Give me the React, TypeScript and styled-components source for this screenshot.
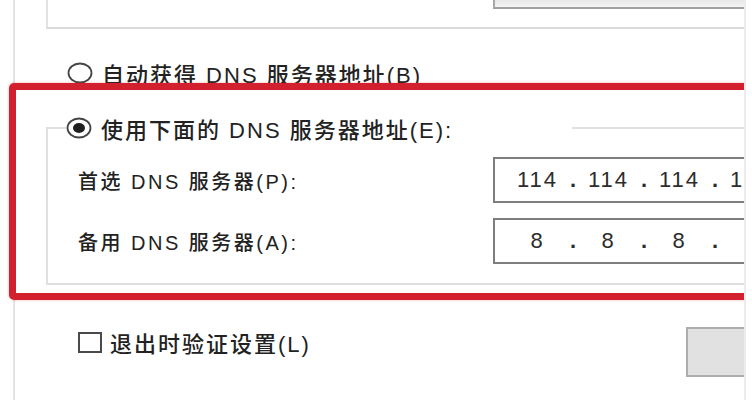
import React from "react";
import styled, { createGlobalStyle } from "styled-components";

const GlobalStyle = createGlobalStyle`
  * { box-sizing: border-box; }
  html, body { margin: 0; padding: 0; background: #ffffff; }
  body {
    font-family: "Liberation Sans", "Noto Sans CJK SC", sans-serif;
    font-weight: 500;
    color: #222;
  }
`;

const Page = styled.div`
  position: relative;
  width: 746px;
  height: 400px;
  overflow: hidden;
  border-right: 2px solid #ececec;
  background: #ffffff;
`;

const Frame = styled.div`
  margin-left: 13px;
  height: 100%;
  border-left: 2px solid #e4e4e4;
  display: flex;
  flex-direction: column;
`;

const TopGroup = styled.div`
  flex: none;
  margin-left: 31px;
  height: 29px;
  border-left: 2px solid #e2e2e2;
  border-bottom: 2px solid #dadada;
  display: flex;
`;

const DisabledBox = styled.div`
  flex: none;
  margin-left: 445px;
  width: 300px;
  height: 9px;
  border-left: 2px solid #a8a8a8;
  border-bottom: 2px solid #a0a0a0;
  background: linear-gradient(#e8e8e8, #f3f3f3);
`;

const RadioRow = styled.div`
  flex: none;
  display: flex;
  align-items: center;
  height: 24px;
  margin: 32px 0 0 52px;
  font-size: 22px;
  letter-spacing: 2px;
  white-space: nowrap;
`;

const Group = styled.fieldset`
  flex: none;
  margin: 31px -40px 0 31px;
  padding: 17px 0 19px 30px;
  border: 2px solid #e0e0e0;
  min-width: 0;
`;

const Legend = styled.legend`
  display: flex;
  align-items: center;
  width: 506px;
  height: 24px;
  padding: 0;
  margin-left: -12px;
  font-size: 22px;
  letter-spacing: 2px;
  white-space: nowrap;
`;

const RadioIcon = styled.svg`
  flex: none;
  margin-right: 9px;
`;

const FieldRow = styled.div<{ $gap?: number }>`
  display: flex;
  align-items: center;
  height: 46px;
  margin-top: ${(p) => p.$gap ?? 0}px;
`;

const FieldLabel = styled.div`
  flex: none;
  width: 415px;
  font-size: 20px;
  letter-spacing: 2.5px;
  white-space: nowrap;
`;

const IpBox = styled.div`
  flex: none;
  display: flex;
  align-items: center;
  width: 320px;
  height: 46px;
  padding-left: 12px;
  border: 2px solid #7e7e7e;
  background: #fff;
  font-family: "Liberation Sans", sans-serif;
  font-size: 22px;
  color: #2c2c2c;
`;

const IpPart = styled.span`
  flex: none;
  width: 61px;
  text-align: center;
  letter-spacing: 2px;
`;

const IpDot = styled.span`
  flex: none;
  width: 10px;
  text-align: center;
  font-weight: bold;
`;

const BottomRow = styled.div`
  flex: none;
  display: flex;
  align-items: flex-start;
  height: 50px;
  margin-top: 42px;
`;

const CheckLabel = styled.div`
  flex: none;
  display: flex;
  align-items: center;
  gap: 8px;
  height: 24px;
  margin: 3px 0 0 63px;
  font-size: 22px;
  letter-spacing: 2px;
  white-space: nowrap;
`;

const CheckBox = styled.span`
  flex: none;
  width: 24px;
  height: 21px;
  border: 2px solid #4a4a4a;
  background: #fff;
`;

const Button = styled.div`
  flex: none;
  margin-left: auto;
  width: 58px;
  height: 50px;
  border: 2px solid #adadad;
  border-right: none;
  background: #e1e1e1;
`;

const Highlight = styled.div`
  position: absolute;
  left: 9px;
  top: 83px;
  right: -30px;
  height: 217px;
  border: 7px solid #d3202f;
  border-radius: 5px;
  box-shadow: 0 0 3px rgba(211, 32, 47, 0.35);
  pointer-events: none;
`;

function Radio({ checked }: { checked?: boolean }) {
  return (
    <RadioIcon width="26" height="22" viewBox="0 0 26 22">
      <ellipse cx="13" cy="11" rx="11.5" ry="9.5" fill="#fff" stroke="#444" strokeWidth="1.8" />
      {checked && <ellipse cx="13" cy="11" rx="6" ry="5" fill="#1f1f1f" />}
    </RadioIcon>
  );
}

function IpAddress({ parts }: { parts: string[] }) {
  return (
    <IpBox>
      {parts.map((p, i) => (
        <React.Fragment key={i}>
          {i > 0 && <IpDot>.</IpDot>}
          <IpPart>{p}</IpPart>
        </React.Fragment>
      ))}
    </IpBox>
  );
}

export default function App() {
  return (
    <Page>
      <GlobalStyle />
      <Frame>
        <TopGroup>
          <DisabledBox />
        </TopGroup>

        <RadioRow>
          <Radio />
          自动获得 DNS 服务器地址(B)
        </RadioRow>

        <Group>
          <Legend>
            <Radio checked />
            使用下面的 DNS 服务器地址(E):
          </Legend>
          <FieldRow>
            <FieldLabel>首选 DNS 服务器(P):</FieldLabel>
            <IpAddress parts={["114", "114", "114", "114"]} />
          </FieldRow>
          <FieldRow $gap={15}>
            <FieldLabel>备用 DNS 服务器(A):</FieldLabel>
            <IpAddress parts={["8", "8", "8", "8"]} />
          </FieldRow>
        </Group>

        <BottomRow>
          <CheckLabel>
            <CheckBox />
            退出时验证设置(L)
          </CheckLabel>
          <Button />
        </BottomRow>
      </Frame>
      <Highlight />
    </Page>
  );
}
